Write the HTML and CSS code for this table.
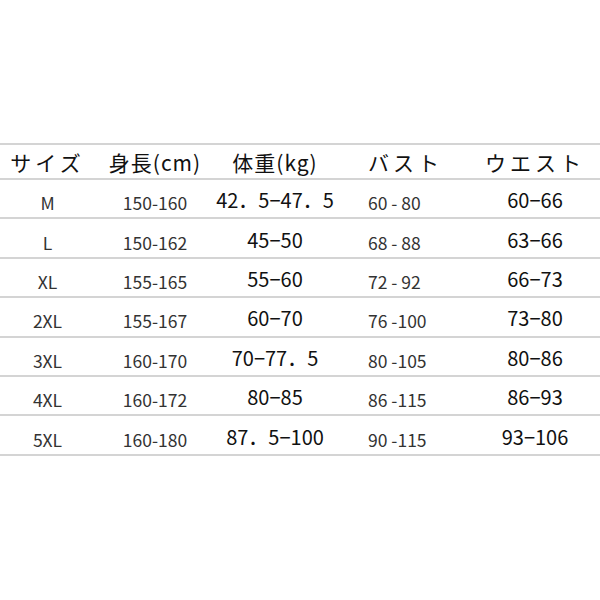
FILE: index.html
```html
<!DOCTYPE html>
<html lang="ja">
<head>
<meta charset="utf-8">
<link rel="stylesheet" href="styles.css">
</head>
<body>
<div class="chart">
  <div class="row head">
    <div class="c c1 kana">サイズ</div>
    <div class="c c2">身長(cm)</div>
    <div class="c c3">体重(kg)</div>
    <div class="c c4 kana">バスト</div>
    <div class="c c5 kana">ウエスト</div>
  </div>
  <div class="row">
    <div class="c c1 sm">M</div><div class="c c2 sm">150-160</div><div class="c c3 big">42．5−47．5</div><div class="c c4 sm">60 - 80</div><div class="c c5 big">60−66</div>
  </div>
  <div class="row">
    <div class="c c1 sm">L</div><div class="c c2 sm">150-162</div><div class="c c3 big">45−50</div><div class="c c4 sm">68 - 88</div><div class="c c5 big">63−66</div>
  </div>
  <div class="row">
    <div class="c c1 sm">XL</div><div class="c c2 sm">155-165</div><div class="c c3 big">55−60</div><div class="c c4 sm">72 - 92</div><div class="c c5 big">66−73</div>
  </div>
  <div class="row">
    <div class="c c1 sm">2XL</div><div class="c c2 sm">155-167</div><div class="c c3 big">60−70</div><div class="c c4 sm">76 -100</div><div class="c c5 big">73−80</div>
  </div>
  <div class="row">
    <div class="c c1 sm">3XL</div><div class="c c2 sm">160-170</div><div class="c c3 big">70−77．5</div><div class="c c4 sm">80 -105</div><div class="c c5 big">80−86</div>
  </div>
  <div class="row">
    <div class="c c1 sm">4XL</div><div class="c c2 sm">160-172</div><div class="c c3 big">80−85</div><div class="c c4 sm">86 -115</div><div class="c c5 big">86−93</div>
  </div>
  <div class="row">
    <div class="c c1 sm">5XL</div><div class="c c2 sm">160-180</div><div class="c c3 big">87．5−100</div><div class="c c4 sm">90 -115</div><div class="c c5 big">93−106</div>
  </div>
</div>
</body>
</html>
```
FILE: styles.css
```css
html, body {
  margin: 0;
  padding: 0;
  background: #ffffff;
}
body {
  width: 600px;
  height: 600px;
  font-family: "Noto Sans CJK JP", "Noto Sans", sans-serif;
  color: #111;
}
.chart {
  padding-top: 143px;
}
.row {
  display: grid;
  grid-template-columns: 95px 120px 120px 135px 130px;
  height: 37.4px;
  border-bottom: 2px solid #d4d4d4;
}
.row.head {
  height: 33px;
  border-top: 2px solid #d4d4d4;
}
.c {
  display: flex;
  align-items: center;
  justify-content: center;
  white-space: nowrap;
}
.c4 {
  justify-content: flex-start;
  padding-left: 33px;
}
.head .c {
  font-size: 21px;
  color: #111;
  letter-spacing: 1px;
}
.head .kana {
  letter-spacing: 4px;
}
.sm {
  font-size: 17.5px;
  color: #333;
  padding-top: 8px;
}
.big {
  font-size: 20px;
  color: #111;
  padding-top: 2px;
}
```
